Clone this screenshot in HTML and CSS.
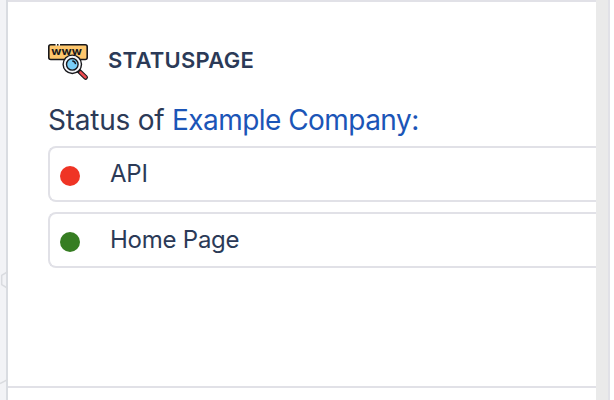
FILE: index.html
```html
<!DOCTYPE html>
<html lang="en">
<head>
<meta charset="utf-8">
<title>Statuspage</title>
<link rel="stylesheet" href="styles.css">
</head>
<body>
<div class="page">
  <aside class="backdrop">
    <svg width="8" height="400" viewBox="0 0 8 400" fill="none" stroke="#d9dbdf" stroke-width="1.5">
      <path d="M8 271.500 1.700 275.300V284.700L8 288.500M0 383.500 8 379.500M7 67v5"/>
    </svg>
  </aside>
  <main class="panel">
    <section class="card">
      <header class="card-header">
        <svg class="logo" width="40" height="40" viewBox="0 0 40 40">
          <rect x=".8" y=".8" width="38.400" height="14.700" rx="2" fill="#fdc66c" stroke="#17171b" stroke-width="1.600"/>
          <path d="M7.500 .8h1.500M10.500 .8h1.500" stroke="#fff" stroke-width="1.700"/>
          <text class="logo-text" x="3.300" y="11" textLength="30.500" lengthAdjust="spacingAndGlyphs">www</text>
          <path d="m30.500 26.500 7.200 7" stroke="#17171b" stroke-width="4.600" stroke-linecap="round"/>
          <path d="m32.500 28.500 5 4.800" stroke="#ed4c50" stroke-width="2.600" stroke-linecap="round"/>
          <circle cx="24.300" cy="20.300" r="9.200" fill="#f5f7fa" stroke="#17171b" stroke-width="1.400"/>
          <circle cx="24.300" cy="20.300" r="5.800" fill="#78cef8" stroke="#17171b" stroke-width="1.400"/>
          <path d="M24.300 17q2.900.2 3.300 3.200" fill="none" stroke="#17171b" stroke-width="1.300"/>
        </svg>
        <h2 class="title">STATUSPAGE</h2>
      </header>
      <p class="summary">Status of <a class="company">Example Company:</a></p>
      <ul class="components">
        <li class="component"><span class="dot down"></span><span class="name">API</span></li>
        <li class="component"><span class="dot up"></span><span class="name">Home Page</span></li>
      </ul>
    </section>
  </main>
  <div class="scrollbar"></div>
</div>
</body>
</html>
```
FILE: styles.css
```css
* { box-sizing: border-box; }
body { margin: 0; background: #fff; color: #2b3a57; font-family: Inter, "Liberation Sans", sans-serif; }
.page { display: flex; width: 610px; height: 400px; overflow: hidden; }
.backdrop { width: 8px; background: #f2f3f6; border-right: 2px solid #d9dce1; }
.backdrop svg { display: block; }
.panel { width: 588px; overflow: hidden; }
.card { height: 388px; padding: 40px 0 0 40px; border-top: 2px solid #e1e1e7; border-bottom: 2px solid #e1e1e7; }
.card-header { display: flex; align-items: flex-start; gap: 20px; height: 60px; }
.logo { flex: none; margin-top: 2px; overflow: visible; }
.logo-text { font: 700 10.500px Inter, sans-serif; fill: #17171b; }
.title { margin: 2px 0 0; font-size: 22px; line-height: 32px; font-weight: 600; letter-spacing: .26px; }
.summary { margin: 0; font-size: 28px; line-height: 36px; white-space: nowrap; letter-spacing: -.24px; }
.company { color: #1b55b7; letter-spacing: -.54px; }
.components { margin: 8px 0 0; padding: 0; list-style: none; display: grid; gap: 10px; }
.component { display: flex; align-items: center; gap: 30px; height: 56px; padding-left: 10px; border: 2px solid #e1e1e7; border-right: 0; border-radius: 8px 0 0 8px; }
.dot { width: 20px; height: 20px; margin-top: 4px; border-radius: 50%; }
.down { background: #ef3425; }
.up { background: #367d22; }
.name { font-size: 24px; line-height: 32px; letter-spacing: -.24px; }
.scrollbar { width: 14px; background: #eaeaea; border-right: 2px solid #e1e1e7; }
```
